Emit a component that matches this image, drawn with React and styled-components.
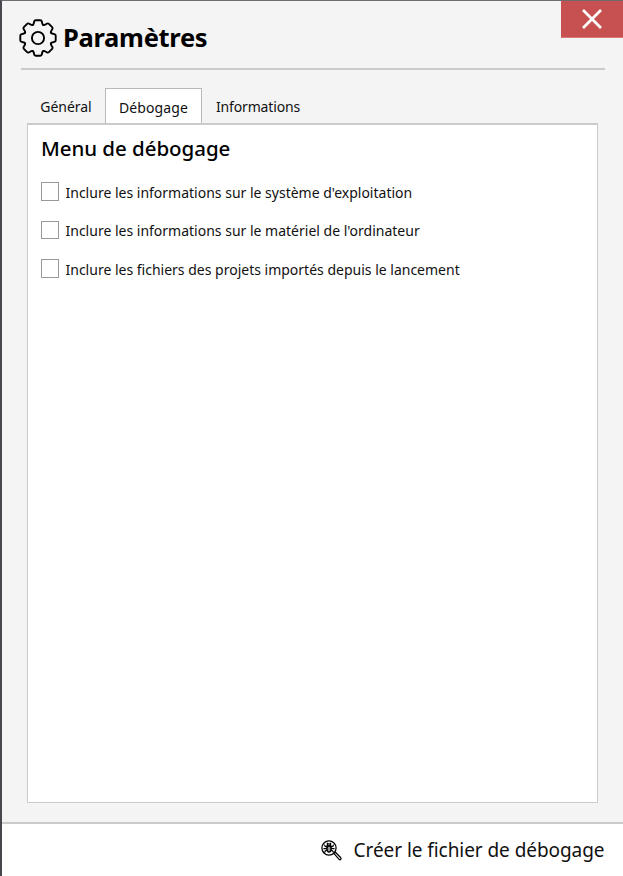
import React from "react";
import styled, { createGlobalStyle } from "styled-components";

const GlobalStyle = createGlobalStyle`
  * { box-sizing: border-box; }
  body { margin: 0; background: #f4f4f4; }
`;

const Window = styled.div`
  display: flex;
  flex-direction: column;
  width: 623px;
  height: 876px;
  overflow: hidden;
  background: #f4f4f4;
  border-left: 2px solid #48484c;
  border-top: 1px solid #6e6a6e;
  color: #000;
  font-family: "Noto Sans", "Open Sans", sans-serif;
`;

const Header = styled.header`
  display: flex;
  align-items: flex-start;
  height: 67px;
  padding-left: 17px;
`;

const GearBox = styled.svg`
  width: 38px;
  height: 38px;
  margin-top: 18px;
  flex: none;
`;

const Title = styled.h1`
  flex: 1;
  margin: 18px 0 0 6px;
  font-size: 25.5px;
  line-height: 36px;
  font-weight: 700;
  letter-spacing: ${(p) => p.$tracking}px;
  white-space: nowrap;
`;

const CloseButton = styled.button`
  display: flex;
  align-items: center;
  justify-content: center;
  width: 62px;
  height: 37px;
  padding: 0;
  border: 0;
  border-bottom: 1px solid #d8797a;
  background: #c75050;
`;

const Rule = styled.hr`
  flex: none;
  height: 2px;
  margin: 0 18px 0 19px;
  border: 0;
  background: #cbcbcb;
`;

const Tabs = styled.nav`
  display: flex;
  align-items: flex-end;
  height: 53px;
  padding-left: 25px;
`;

const Tab = styled.button`
  height: ${(p) => (p.$active ? 35 : 33)}px;
  width: ${(p) => p.$width}px;
  padding: ${(p) => (p.$active ? "3px 0 0" : "0")};
  border: ${(p) => (p.$active ? "1px solid #b8b8b8" : "0")};
  border-bottom: 0;
  background: ${(p) => (p.$active ? "#fff" : "transparent")};
  color: #111;
  font: 14px/20px "Noto Sans", sans-serif;
  letter-spacing: ${(p) => p.$tracking}px;
  white-space: nowrap;
`;

const Panel = styled.main`
  flex: none;
  width: 571px;
  height: 680px;
  margin-left: 25px;
  padding: 9px 13px;
  border: 1px solid #cbcbcb;
  border-top-width: 2px;
  background: #fff;
`;

const Heading = styled.h2`
  margin: 0;
  font-size: 20.5px;
  line-height: 28px;
  font-weight: 500;
  letter-spacing: ${(p) => p.$tracking}px;
  white-space: nowrap;
`;

const Options = styled.div`
  display: flex;
  flex-direction: column;
  gap: 18.5px;
  margin-top: 20px;
`;

const Option = styled.label`
  display: flex;
  align-items: center;
  height: 20px;
  gap: 6.5px;
  color: #111;
  font-size: 14px;
  line-height: 20px;
  white-space: nowrap;
`;

const OptionText = styled.span`
  padding-top: ${(p) => p.$drop}px;
`;

const Box = styled.input`
  appearance: none;
  flex: none;
  width: 18px;
  height: ${(p) => p.$height}px;
  margin: 0 0 2px;
  border: 1px solid #999;
  background: #fff;
`;

const Footer = styled.footer`
  display: flex;
  align-items: center;
  justify-content: flex-end;
  height: 54px;
  margin-top: auto;
  padding-right: 18.5px;
  border-top: 2px solid #cbcbcb;
  background: #fff;
`;

const Action = styled.button`
  display: flex;
  align-items: center;
  gap: 11px;
  padding: 0;
  border: 0;
  background: none;
  color: #111;
  font: 19px/28px "Noto Sans", sans-serif;
  letter-spacing: ${(p) => p.$tracking}px;
  white-space: nowrap;
`;

const BugIcon = styled.svg`
  width: 22px;
  height: 22px;
  margin-top: 2px;
`;

// One tooth, pointing up; eight rotated copies close the outline.
const TOOTH =
  "M-5.3 -12.9Q-4.4 -13.6 -4.2 -14.8L-3.9 -16.3Q-3.6 -17.7 -2.3 -17.7L2.3 -17.7Q3.6 -17.7 3.9 -16.3L4.2 -14.8Q4.4 -13.6 5.3 -12.9";

function Gear() {
  return (
    <GearBox viewBox="-19 -19 38 38" fill="none" stroke="#000" strokeWidth="1.9" strokeLinecap="round">
      {[0, 45, 90, 135, 180, 225, 270, 315].map((a) => (
        <path key={a} d={TOOTH} transform={`rotate(${a})`} />
      ))}
      <circle r="6.1" />
    </GearBox>
  );
}

function BugSearch() {
  return (
    <BugIcon viewBox="0 0 22 22" fill="none" stroke="#000" strokeWidth="1.25" strokeLinecap="round">
      <circle cx="8" cy="8" r="7.1" />
      <path d="M13 13.6l1.4-1.4 5.4 5.6c1 1.1-.6 2.6-1.7 1.6z" />
      <ellipse cx="8" cy="9" rx="2.1" ry="3.1" fill="#999" />
      <path d="M6.1 5.8a1.9 1.9 0 0 1 3.8 0zM6.2 3.2l.9 1M9.8 3.2l-.9 1M2.9 8.7h2.8M10.3 8.7h2.8M3.7 5.2l.5 1.2 2 .9M12.3 5.2l-.5 1.2-2 .9M3.7 12.2l.6-1.2 1.9-.8M12.3 12.2l-.6-1.2-1.9-.8" />
    </BugIcon>
  );
}

const OPTIONS = [
  { text: "Inclure les informations sur le système d'exploitation", drop: 2, box: 19 },
  { text: "Inclure les informations sur le matériel de l'ordinateur", drop: 0, box: 18 },
  { text: "Inclure les fichiers des projets importés depuis le lancement", drop: 1, box: 19 },
];

export default function App() {
  return (
    <>
      <GlobalStyle />
      <Window>
        <Header>
          <Gear />
          <Title $tracking={-0.3}>Paramètres</Title>
          <CloseButton aria-label="Fermer">
            <svg width="20" height="20" viewBox="0 0 20 20" stroke="#fff" strokeWidth="2.7">
              <path d="M1 1L19 19M19 1L1 19" />
            </svg>
          </CloseButton>
        </Header>
        <Rule />
        <Tabs>
          <Tab $width={78} $tracking={-0.04}>Général</Tab>
          <Tab $width={97} $tracking={0.1} $active>Débogage</Tab>
          <Tab $width={112} $tracking={-0.15}>Informations</Tab>
        </Tabs>
        <Panel>
          <Heading $tracking={-0.05}>Menu de débogage</Heading>
          <Options>
            {OPTIONS.map(({ text, drop, box }) => (
              <Option key={text}>
                <Box type="checkbox" $height={box} />
                <OptionText $drop={drop}>{text}</OptionText>
              </Option>
            ))}
          </Options>
        </Panel>
        <Footer>
          <Action $tracking={-0.06}>
            <BugSearch />
            Créer le fichier de débogage
          </Action>
        </Footer>
      </Window>
    </>
  );
}
